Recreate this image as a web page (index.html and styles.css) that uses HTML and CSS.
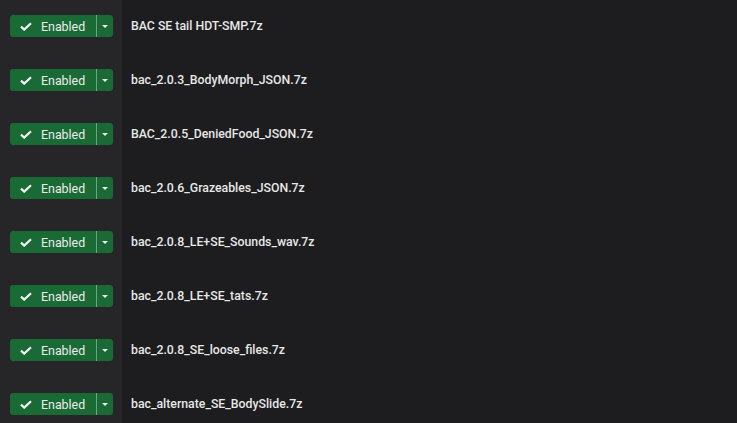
FILE: index.html
```html
<!DOCTYPE html>
<html>
<head>
<meta charset="utf-8">
<link rel="stylesheet" href="styles.css">
</head>
<body>
<div class="list">
  <div class="row"><div class="cell-status"><div class="split"><span class="main"><svg class="check" viewBox="0 0 12 9"><path d="M1 4.6 L4.2 7.6 L11 1.2" /></svg>Enabled</span><span class="sep"></span><span class="drop"><span class="caret"></span></span></div></div><div class="cell-name">BAC SE tail HDT-SMP.7z</div></div>
  <div class="row"><div class="cell-status"><div class="split"><span class="main"><svg class="check" viewBox="0 0 12 9"><path d="M1 4.6 L4.2 7.6 L11 1.2" /></svg>Enabled</span><span class="sep"></span><span class="drop"><span class="caret"></span></span></div></div><div class="cell-name">bac_2.0.3_BodyMorph_JSON.7z</div></div>
  <div class="row"><div class="cell-status"><div class="split"><span class="main"><svg class="check" viewBox="0 0 12 9"><path d="M1 4.6 L4.2 7.6 L11 1.2" /></svg>Enabled</span><span class="sep"></span><span class="drop"><span class="caret"></span></span></div></div><div class="cell-name">BAC_2.0.5_DeniedFood_JSON.7z</div></div>
  <div class="row"><div class="cell-status"><div class="split"><span class="main"><svg class="check" viewBox="0 0 12 9"><path d="M1 4.6 L4.2 7.6 L11 1.2" /></svg>Enabled</span><span class="sep"></span><span class="drop"><span class="caret"></span></span></div></div><div class="cell-name">bac_2.0.6_Grazeables_JSON.7z</div></div>
  <div class="row"><div class="cell-status"><div class="split"><span class="main"><svg class="check" viewBox="0 0 12 9"><path d="M1 4.6 L4.2 7.6 L11 1.2" /></svg>Enabled</span><span class="sep"></span><span class="drop"><span class="caret"></span></span></div></div><div class="cell-name">bac_2.0.8_LE+SE_Sounds_wav.7z</div></div>
  <div class="row"><div class="cell-status"><div class="split"><span class="main"><svg class="check" viewBox="0 0 12 9"><path d="M1 4.6 L4.2 7.6 L11 1.2" /></svg>Enabled</span><span class="sep"></span><span class="drop"><span class="caret"></span></span></div></div><div class="cell-name">bac_2.0.8_LE+SE_tats.7z</div></div>
  <div class="row"><div class="cell-status"><div class="split"><span class="main"><svg class="check" viewBox="0 0 12 9"><path d="M1 4.6 L4.2 7.6 L11 1.2" /></svg>Enabled</span><span class="sep"></span><span class="drop"><span class="caret"></span></span></div></div><div class="cell-name">bac_2.0.8_SE_loose_files.7z</div></div>
  <div class="row"><div class="cell-status"><div class="split"><span class="main"><svg class="check" viewBox="0 0 12 9"><path d="M1 4.6 L4.2 7.6 L11 1.2" /></svg>Enabled</span><span class="sep"></span><span class="drop"><span class="caret"></span></span></div></div><div class="cell-name">bac_alternate_SE_BodySlide.7z</div></div>
</div>
</body>
</html>
```
FILE: styles.css
```css
html, body {
  margin: 0;
  padding: 0;
  height: 100%;
  overflow: hidden;
}
body {
  background: #1d1d1f;
  font-family: Roboto, "Liberation Sans", sans-serif;
  font-size: 12px;
  color: #e6e6e6;
}
.list {
  display: flex;
  flex-direction: column;
  min-height: 100%;
  background: linear-gradient(to right, #262628 0, #262628 122px, #1d1d1f 122px);
}
.row {
  display: flex;
  height: 54px;
}
.cell-status {
  width: 122px;
  flex: none;
  padding: 15px 0 0 10px;
  box-sizing: border-box;
}
.cell-name {
  padding: 18px 0 0 9px;
  font-weight: 500;
  font-size: 12.3px;
  line-height: 16px;
  color: #e8e8e8;
}
.split {
  display: flex;
  width: 103px;
  height: 22px;
  background: #1a6a35;
  border-radius: 3px;
  color: #ececec;
}
.main {
  display: flex;
  align-items: center;
  width: 86px;
  padding-left: 10px;
  box-sizing: border-box;
  font-weight: 400;
  font-size: 12.4px;
}
.check {
  width: 12px;
  height: 9px;
  margin-right: 9px;
  fill: none;
  stroke: #f2f2f2;
  stroke-width: 2.2;
}
.sep {
  width: 1px;
  background: #6ea37b;
}
.drop {
  flex: 1;
  display: flex;
  align-items: center;
  justify-content: center;
}
.caret {
  width: 0;
  height: 0;
  border-left: 3px solid transparent;
  border-right: 3px solid transparent;
  border-top: 3px solid #f0f0f0;
}
```
